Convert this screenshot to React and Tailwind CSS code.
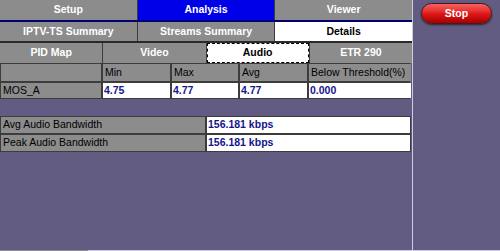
import React from "react";

const font = { fontFamily: '"Liberation Sans", Arial, sans-serif' };

const Tab = ({ label, active, selected, dashed }) => {
  let cls = "bg-[#8c8c8c] text-white";
  if (active) cls = "bg-[#0000e8] text-white";
  if (selected) cls = "bg-white text-black";
  if (dashed) cls = "bg-white text-black border border-dashed border-black";
  return (
    <div className={`flex items-center justify-center text-[10.5px] font-bold whitespace-nowrap ${cls}`}>
      {label}
    </div>
  );
};

const head = "bg-[#8c8c8c] text-black px-[2px] flex items-center whitespace-nowrap";
const val = "bg-white text-[#14148c] font-bold px-[1px] flex items-center whitespace-nowrap";

const App = () => {
  return (
    <div className="w-[500px] h-[251px] bg-[#625c82] flex overflow-hidden" style={font}>
      <div className="w-[412px] flex flex-col">
        <div className="grid grid-cols-3 gap-px bg-[#3c3c3c] h-[20px]">
          <Tab label="Setup" />
          <Tab label="Analysis" active />
          <Tab label="Viewer" />
        </div>
        <div className="h-[2px] bg-[#000070]" />
        <div className="grid grid-cols-3 gap-px bg-[#3c3c3c] h-[19px]">
          <Tab label="IPTV-TS Summary" />
          <Tab label="Streams Summary" />
          <Tab label="Details" selected />
        </div>
        <div className="h-[2px] bg-[#2a2a2a]" />
        <div className="grid grid-cols-4 gap-px bg-[#3c3c3c] h-[20px]">
          <Tab label="PID Map" />
          <Tab label="Video" />
          <Tab label="Audio" dashed />
          <Tab label="ETR 290" />
        </div>

        <div className="w-[410px] grid grid-cols-[100px_67px_66px_67px_102px] grid-rows-[17px_15px] gap-[2px] bg-[#3c3c3c] border border-[#3c3c3c] text-[10.5px]">
          <div className={head} />
          <div className={head}>Min</div>
          <div className={head}>Max</div>
          <div className={head}>Avg</div>
          <div className={head}>Below Threshold(%)</div>
          <div className={head}>MOS_A</div>
          <div className={val}>4.75</div>
          <div className={val}>4.77</div>
          <div className={val}>4.77</div>
          <div className={val}>0.000</div>
        </div>

        <div className="mt-[17px] w-[411px] grid grid-cols-[204px_203px] grid-rows-[16px_16px] gap-[2px] bg-[#3c3c3c] border border-[#3c3c3c] text-[10.5px]">
          <div className={head}>Avg Audio Bandwidth</div>
          <div className={val}>156.181 kbps</div>
          <div className={head}>Peak Audio Bandwidth</div>
          <div className={val}>156.181 kbps</div>
        </div>

        <div className="mt-auto h-px flex">
          <div className="w-[88px] bg-[#8c8c8c]" />
          <div className="flex-1 bg-[#cfcbe0]" />
        </div>
      </div>

      <div className="w-[88px] border-l border-[#cfcbe0] flex flex-col">
        <div className="mt-[3px] ml-[8px] w-[71px] h-[21px] rounded-full border border-[#4a1a1a] bg-gradient-to-b from-[#f46060] via-[#e01818] to-[#a80000] shadow-[0_1px_2px_rgba(0,0,0,0.6)] flex items-center justify-center text-white text-[10.5px] font-bold">
          Stop
        </div>
        <div className="mt-auto h-px bg-[#cfcbe0]" />
      </div>
    </div>
  );
};

export default App;
